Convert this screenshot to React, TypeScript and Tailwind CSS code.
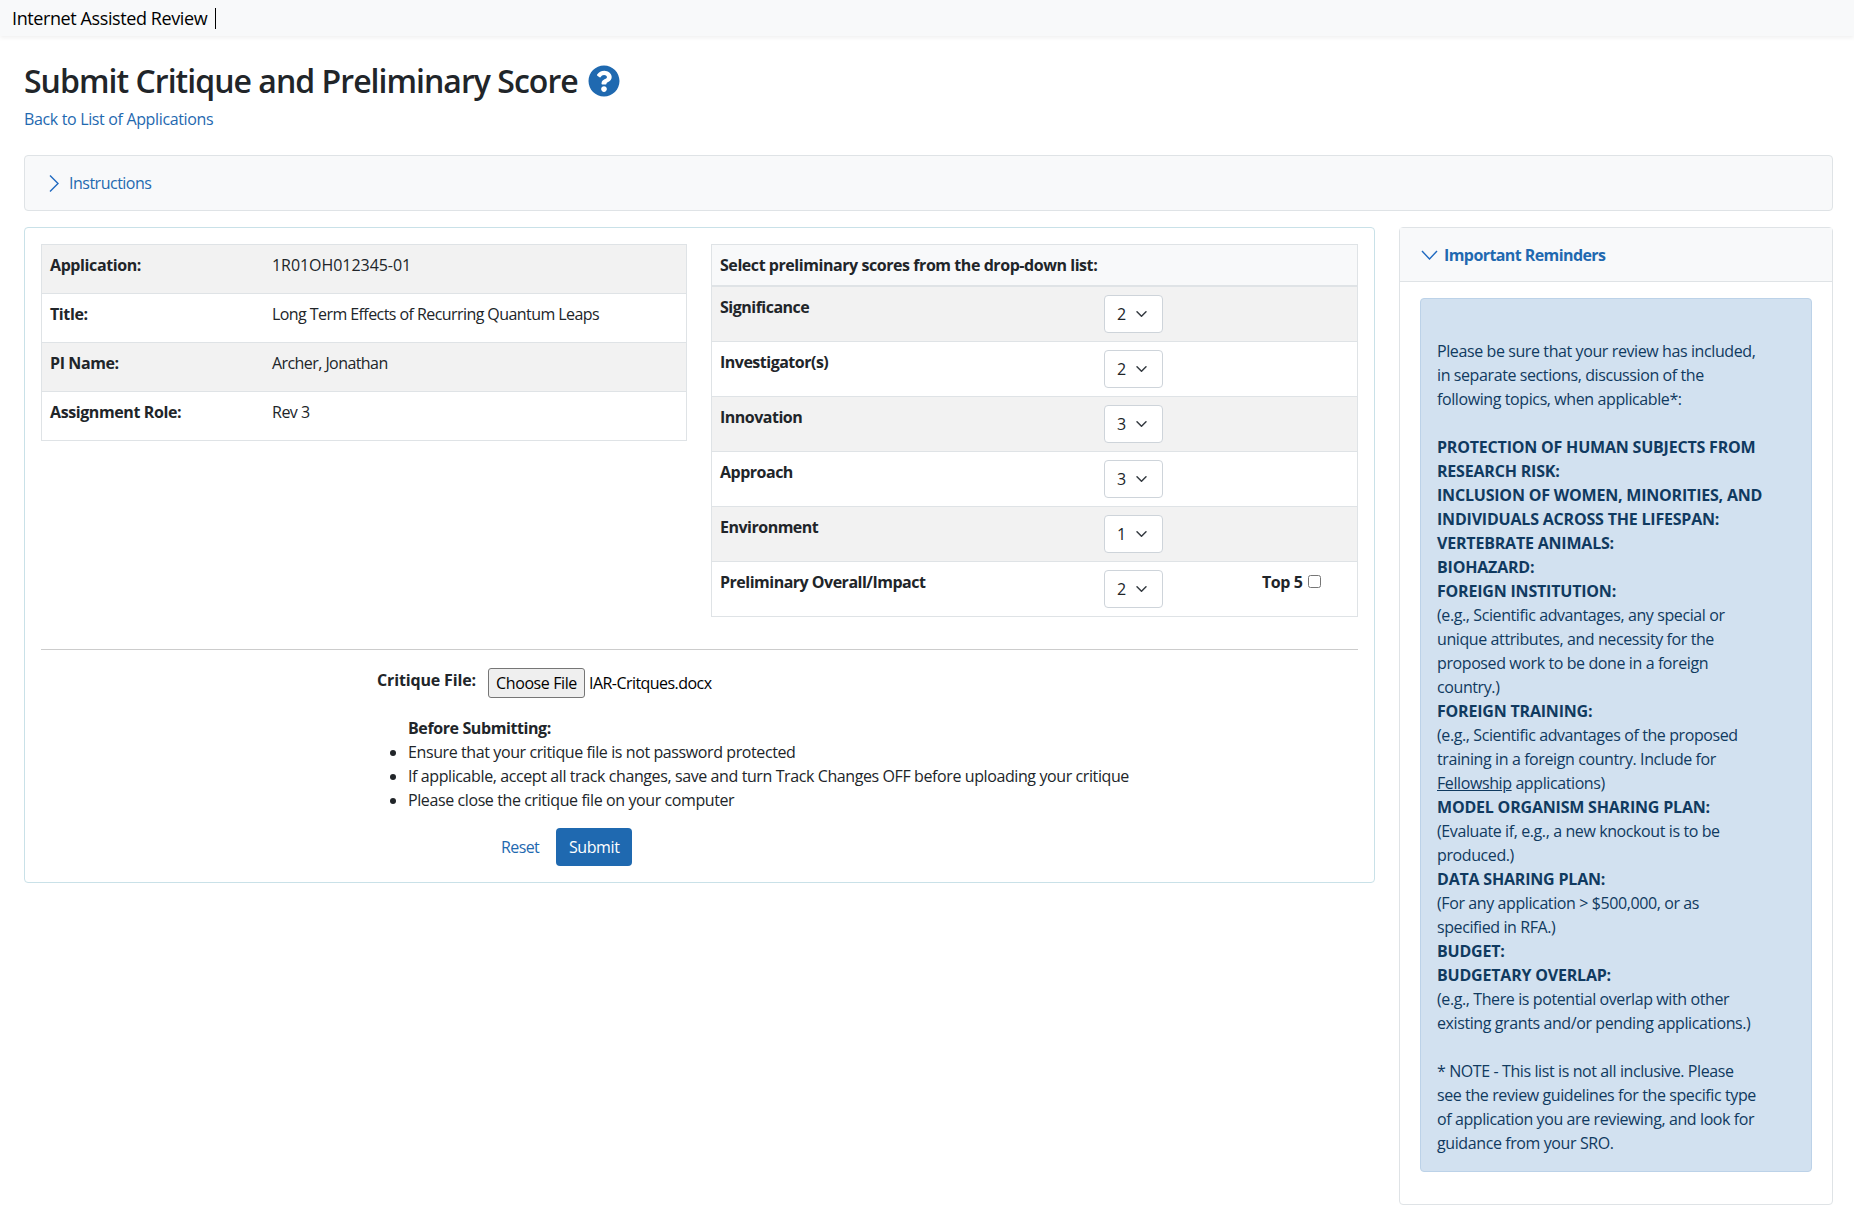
import React from "react";
import { FaQuestionCircle } from "react-icons/fa";

const info = [
  ["Application:", "1R01OH012345-01", "tracking-[-0.05px]"],
  ["Title:", "Long Term Effects of Recurring Quantum Leaps", "tracking-[-0.57px]"],
  ["PI Name:", "Archer, Jonathan", "tracking-[-0.57px]"],
  ["Assignment Role:", "Rev 3", "tracking-[-0.5px]"],
];
const scores = [
  ["Significance", "2"],
  ["Investigator(s)", "2"],
  ["Innovation", "3"],
  ["Approach", "3"],
  ["Environment", "1"],
  ["Preliminary Overall/Impact", "2"],
];

function Select({ value }: { value: string }) {
  return (
    <div className="relative w-[59px] h-[38px]">
      <select
        defaultValue={value}
        className="appearance-none w-full h-full bg-white border border-[#ced4da] rounded-[4px] pl-[12px] text-[16px] text-[#212529] outline-none"
      >
        {["1", "2", "3", "4", "5", "6", "7", "8", "9"].map((o) => (
          <option key={o}>{o}</option>
        ))}
      </select>
      <svg className="absolute left-[31px] top-[13px] w-[13px] h-[12px] pointer-events-none" viewBox="0 0 16 16" fill="none" stroke="#343a40" strokeWidth="2" strokeLinecap="round" strokeLinejoin="round">
        <path d="M2 5l6 6 6-6" />
      </svg>
    </div>
  );
}

export default function App() {
  return (
    <div className="min-h-[1220px] bg-white text-[#212529] text-[16px] leading-[24px] tracking-[-0.4px] font-['Open_Sans','Noto_Sans',sans-serif]">
      <nav className="h-[36px] bg-[#f8f9fa] shadow-[0_2px_4px_rgba(0,0,0,0.06)] flex items-center pl-[12px]">
        <span className="text-[18px] tracking-[-0.4px] text-black pr-[8px] border-r border-black h-[21px] flex items-center">Internet Assisted Review</span>
      </nav>

      <main className="pl-[24px] pr-[21px]">
        <div className="flex items-center gap-[10px] mt-[29px] h-[32px]">
          <h1 className="text-[32px] leading-[38px] font-semibold tracking-[-0.97px]">Submit Critique and Preliminary Score</h1>
          <FaQuestionCircle className="w-[32px] h-[32px] text-[#1f69b0]" />
        </div>
        <a className="block mt-[10px] text-[#1f69b0] tracking-[-0.35px]">Back to List of Applications</a>

        <div className="mt-[24px] h-[56px] bg-[#f8f9fa] border border-[#dfe3e6] rounded-[4px] flex items-center pl-[24px]">
          <svg className="w-[10px] h-[17px] mr-[10px]" viewBox="0 0 10 17" fill="none" stroke="#1f69c0" strokeWidth="1.4">
            <path d="M1 .5l8 8-8 8" />
          </svg>
          <span className="text-[#1f69b0] tracking-[-0.5px]">Instructions</span>
        </div>

        <div className="flex gap-[24px] mt-[16px] items-start">
          <section className="flex-1 h-[656px] border border-[#c9e1e8] rounded-[4px] px-[16px] pt-[16px]">
            <div className="grid grid-cols-[646px_647px] gap-[24px] h-[372px]">
              <div className="self-start border border-[#dfe3e6] border-b-0">
                {info.map(([k, v, t], i) => (
                  <div key={k} className={`flex h-[49px] pt-[8px] pl-[8px] border-b border-[#dfe3e6] ${i % 2 === 0 ? "bg-[#f2f2f2]" : "bg-white"}`}>
                    <span className="w-[222px] font-bold">{k}</span>
                    <span className={t}>{v}</span>
                  </div>
                ))}
              </div>
              <div className="border border-[#dfe3e6] border-b-0">
                <div className="h-[42px] bg-[#f8f9fa] border-b-2 border-[#dfe3e6] pl-[8px] pt-[8px] font-bold tracking-[-0.44px]">
                  Select preliminary scores from the drop-down list:
                </div>
                {scores.map(([k, v], i) => (
                  <div key={k} className={`flex h-[55px] pt-[8px] pl-[8px] border-b border-[#dfe3e6] ${i % 2 === 0 ? "bg-[#f2f2f2]" : "bg-white"}`}>
                    <span className="w-[384px] font-bold tracking-[-0.5px]">{k}</span>
                    <Select value={v} />
                    {i === 5 && (
                      <span className="ml-[99px] flex items-start font-bold">
                        Top 5
                        <input type="checkbox" className="ml-[5px] mt-[5px] w-[13px] h-[13px]" />
                      </span>
                    )}
                  </div>
                ))}
              </div>
            </div>

            <hr className="mt-[33px] border-t border-[#cccccc]" />

            <div className="ml-[336px] mt-[18px] flex items-start">
              <span className="font-bold w-[111px] tracking-[-0.15px]">Critique File:</span>
              <button className="w-[97px] h-[30px] bg-[#efefef] border border-[#767676] rounded-[3px] text-[16px] text-black">Choose File</button>
              <span className="ml-[4px] mt-[3px] text-black tracking-[-0.55px]">IAR-Critques.docx</span>
            </div>

            <div className="ml-[367px] mt-[18px] font-bold">Before Submitting:</div>
            <ul className="ml-[367px] list-disc">
              <li>Ensure that your critique file is not password protected</li>
              <li>If applicable, accept all track changes, save and turn Track Changes OFF before uploading your critique</li>
              <li>Please close the critique file on your computer</li>
            </ul>

            <div className="ml-[460px] mt-[16px] flex items-center">
              <a className="text-[#1f69b0] tracking-[-0.6px]">Reset</a>
              <button className="ml-[17px] w-[76px] h-[38px] bg-[#1f69b0] rounded-[4px] text-white">Submit</button>
            </div>
          </section>

          <aside className="w-[434px] h-[978px] border border-[#dfe3e6] rounded-[4px]">
            <div className="h-[54px] bg-[#f8f9fa] border-b border-[#dfe3e6] flex items-center pl-[21px] font-bold tracking-[-0.58px] text-[#1f69b0]">
              <svg className="w-[17px] h-[10px] mr-[6px]" viewBox="0 0 17 10" fill="none" stroke="#1f69c0" strokeWidth="1.4">
                <path d="M1 1l7.5 8 7.5-8" />
              </svg>
              Important Reminders
            </div>
            <div className="mx-[20px] mt-[16px] h-[874px] bg-[#d2e1f0] border border-[#bcd2e8] rounded-[4px] p-[16px] text-[#103a60] whitespace-nowrap tracking-[-0.4px]">
              <br />
              Please be sure that your review has included,<br />
              in separate sections, discussion of the<br />
              following topics, when applicable*:<br />
              <br />
              <b className="tracking-[-0.2px]">PROTECTION OF HUMAN SUBJECTS FROM<br />RESEARCH RISK:</b><br />
              <b className="tracking-[-0.2px]">INCLUSION OF WOMEN, MINORITIES, AND<br />INDIVIDUALS ACROSS THE LIFESPAN:</b><br />
              <b className="tracking-[-0.2px]">VERTEBRATE ANIMALS:</b><br />
              <b className="tracking-[-0.2px]">BIOHAZARD:</b><br />
              <b className="tracking-[-0.2px]">FOREIGN INSTITUTION:</b><br />
              (e.g., Scientific advantages, any special or<br />
              unique attributes, and necessity for the<br />
              proposed work to be done in a foreign<br />
              country.)<br />
              <b className="tracking-[-0.2px]">FOREIGN TRAINING:</b><br />
              (e.g., Scientific advantages of the proposed<br />
              training in a foreign country. Include for<br />
              <u>Fellowship</u> applications)<br />
              <b className="tracking-[-0.2px]">MODEL ORGANISM SHARING PLAN:</b><br />
              (Evaluate if, e.g., a new knockout is to be<br />
              produced.)<br />
              <b className="tracking-[-0.2px]">DATA SHARING PLAN:</b><br />
              (For any application &gt; $500,000, or as<br />
              specified in RFA.)<br />
              <b className="tracking-[-0.2px]">BUDGET:</b><br />
              <b className="tracking-[-0.2px]">BUDGETARY OVERLAP:</b><br />
              (e.g., There is potential overlap with other<br />
              existing grants and/or pending applications.)<br />
              <br />
              * NOTE - This list is not all inclusive. Please<br />
              see the review guidelines for the specific type<br />
              of application you are reviewing, and look for<br />
              guidance from your SRO.
            </div>
          </aside>
        </div>
      </main>
    </div>
  );
}
